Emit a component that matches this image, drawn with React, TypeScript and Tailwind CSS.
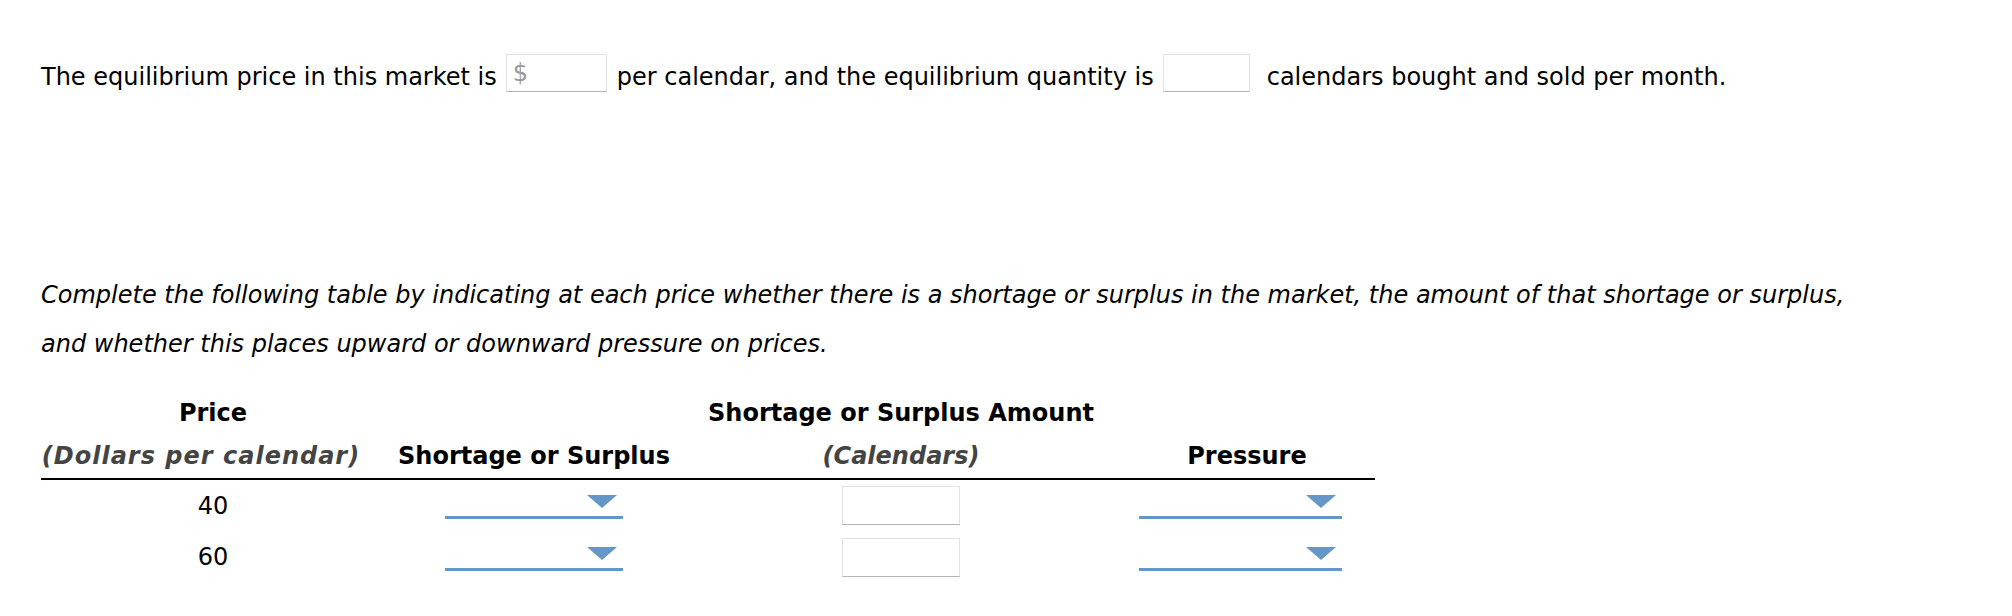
import React from "react";

const Blank = ({ w, placeholder }: { w: string; placeholder?: string }) => (
  <div
    className={`flex h-[38px] ${w} items-center border border-[#e3e3e3] border-b-[#b5b5b5] bg-white pl-[6px] text-[#9a9a9a]`}
  >
    {placeholder}
  </div>
);

const Dropdown = ({ w, className }: { w: string; className: string }) => (
  <div className={`flex h-[27px] ${w} ${className} items-start justify-end border-b-[3px] border-[#6497c8] pr-[6px] pt-[3px]`}>
    <svg width="30" height="13" viewBox="0 0 30 13">
      <polygon points="0,0 30,0 15,13" fill="#6497c8" />
    </svg>
  </div>
);

const AmountBox = () => (
  <div className="mx-auto h-[39px] w-[118px] border border-[#e3e3e3] border-b-[#b5b5b5] bg-white" />
);

export default function App() {
  const rows = ["40", "60"];

  return (
    <div className="min-h-screen bg-white pl-[41px] pt-[54px] font-['DejaVu_Sans',Verdana,sans-serif] text-[24px] text-black">
      <div className="flex items-center whitespace-nowrap">
        <span>The equilibrium price in this market is</span>
        <div className="mb-[8px] ml-[9px] mr-[10px]">
          <Blank w="w-[101px]" placeholder="$" />
        </div>
        <span>per calendar, and the equilibrium quantity is</span>
        <div className="mb-[8px] ml-[9px] mr-[17px]">
          <Blank w="w-[87px]" />
        </div>
        <span>calendars bought and sold per month.</span>
      </div>

      <p className="mt-[171px] italic leading-[49px]">
        Complete the following table by indicating at each price whether there is a shortage or surplus in the market, the amount of that shortage or surplus,
        <br />
        and whether this places upward or downward pressure on prices.
      </p>

      <table className="mt-[22px] w-[1334px] table-fixed border-collapse">
        <colgroup>
          <col className="w-[344px]" />
          <col className="w-[298px]" />
          <col className="w-[436px]" />
          <col className="w-[256px]" />
        </colgroup>
        <thead className="font-bold">
          <tr className="h-[44px]">
            <th className="text-center">Price</th>
            <th />
            <th className="text-center">Shortage or Surplus Amount</th>
            <th />
          </tr>
          <tr className="h-[44px] border-b-2 border-black">
            <th className="pb-[2px] pr-[24px] text-center italic tracking-[1px] text-[#444]">(Dollars per calendar)</th>
            <th className="pb-[2px] text-center">Shortage or Surplus</th>
            <th className="pb-[2px] text-center italic text-[#444]">(Calendars)</th>
            <th className="pb-[2px] text-center">Pressure</th>
          </tr>
        </thead>
        <tbody>
          {rows.map((price) => (
            <tr key={price} className="h-[52px]">
              <td className="text-center">{price}</td>
              <td>
                <Dropdown w="w-[178px]" className="mx-auto" />
              </td>
              <td>
                <AmountBox />
              </td>
              <td>
                <Dropdown w="w-[203px]" className="ml-[20px]" />
              </td>
            </tr>
          ))}
        </tbody>
      </table>
    </div>
  );
}
